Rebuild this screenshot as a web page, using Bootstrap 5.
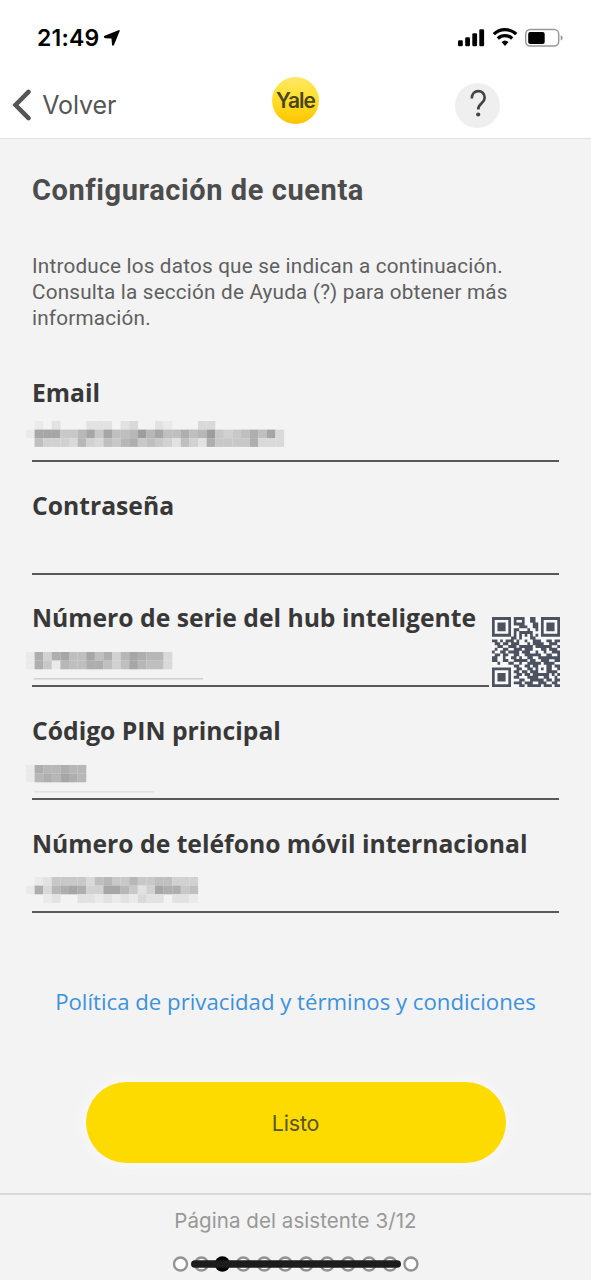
<!DOCTYPE html>
<html lang="es">
<head>
<meta charset="utf-8">
<meta name="viewport" content="width=device-width, initial-scale=1">
<title>Configuración de cuenta</title>
<link href="https://cdn.jsdelivr.net/npm/bootstrap@5.3.0/dist/css/bootstrap.min.css" rel="stylesheet">
<style>
  body { background: #f3f3f3; color: #505050; font-family: Roboto, sans-serif; }
  .screen { height: 1280px; overflow: hidden; }
  .ui-font { font-family: Inter, sans-serif; }
  .top-area { height: 139px; background: #fff; border-bottom: 1px solid #dfdfdf; }
  .status-row { height: 75px; padding: 0 27px 0 37px; color: #000; }
  .clock { font-size: 23px; font-weight: 600; letter-spacing: .2px; line-height: 1; padding-top: 2px; }
  .nav-row { height: 63px; padding-left: 12px; padding-bottom: 3px; }
  .back { width: 260px; font-size: 25px; color: #555; line-height: 1; letter-spacing: -.1px; }
  .logo { width: 47px; height: 47px; margin-top: -9px; background: linear-gradient(#ffe866, #ffe02c 45%, #fdc400); color: #4a4520; font: 600 21px/47px Inter, sans-serif; letter-spacing: -1px; }
  .help { width: 45px; height: 45px; margin-left: 136px; background: #efefef; }
  .form-area { height: 1054px; padding: 0 32px; }
  h1 { margin: 35px 0 0; font-size: 29px; line-height: 32px; font-weight: 700; color: #4c4c4c; letter-spacing: .58px; }
  .intro { margin: 47px 0 0; font-size: 20.700px; line-height: 26px; letter-spacing: .2px; color: #606060; }
  .fields { margin-top: 45px; }
  .entry { height: 112.7px; }
  .entry label { display: block; font: 700 24.7px/34px "Open Sans", sans-serif; color: #383838; white-space: nowrap; }
  .value-line { height: 52px; border-bottom: 2px solid #585858; }
  .value-line svg { display: block; margin-left: -6px; }
  .scan { margin: 15.500px -1px 0 3px; }
  .terms { font: 22.2px/30px "Open Sans", sans-serif; color: #3c92dc; margin-top: 48px; white-space: nowrap; }
  .done { width: 420px; height: 81px; margin: 65px auto 0; border: 0; background: #fedb00; color: #5a5426; font: 400 21.5px/1 Inter, sans-serif; letter-spacing: -.2px; box-shadow: 0 0 12px 3px #f8f8f8; padding-top: 8px; }
  .done:hover { background: #fedb00; }
  .wizard { height: 87px; border-top: 2px solid #d9d9d9; }
  .wizard p { margin: 12px 0 0; font-size: 20.5px; letter-spacing: .07px; line-height: 28px; color: #989898; }
  .wizard svg { margin-top: 20px; }
</style>
</head>
<body>
<div class="screen d-flex flex-column">
  <header class="top-area">
    <div class="status-row d-flex align-items-center justify-content-between ui-font">
      <div class="d-flex align-items-center">
        <span class="clock">21:49</span>
        <svg class="ms-1" width="18" height="18" viewBox="0 0 18 18"><path d="M1 7 15.500 1.200Q17.200.700 16.600 2.200L11 16Q9.800 17.500 9 16L8.500 9.500 2 9.300Q.3 8.500 1 7Z"/></svg>
      </div>
      <svg width="106" height="22" viewBox="0 0 106 22">
        <g transform="translate(0 -.7)"><rect x="0" y="14" width="4.800" height="6" rx="1.300"/><rect x="7.200" y="11" width="4.800" height="9" rx="1.300"/><rect x="14.300" y="7" width="4.800" height="13" rx="1.300"/><rect x="21.300" y="3" width="4.800" height="17" rx="1.300"/></g>
        <g transform="translate(0 -1)"><g fill="none" stroke="#000" stroke-width="3.300"><path d="M35.800 8.200C42 2 52 2 58.200 8.200"/><path d="M39.800 12.500C44 8.700 50 8.700 54.200 12.500"/></g>
        <path d="M43.500 16Q47 13 50.500 16L47 20Z"/></g>
        <g transform="translate(-.8 -1)"><rect x="68.500" y="3.500" width="33" height="16.500" rx="4.500" fill="#fff" stroke="#999" stroke-width="1.500"/>
        <rect x="71" y="6" width="16.500" height="12" rx="2"/>
        <path d="M103.500 9.200q2 .5 2 2.600t-2 2.600Z" fill="#999"/></g>
      </svg>
    </div>
    <nav class="nav-row d-flex align-items-center">
      <a class="back d-flex align-items-center text-decoration-none ui-font" href="#">
        <svg width="20" height="32" viewBox="0 0 20 32" fill="none" stroke="#555" stroke-width="4.500" stroke-linecap="round" stroke-linejoin="miter"><path d="M16.500 2.800 3.500 16 16.500 29.200"/></svg>
        <span class="ps-2">&#8202;Volver</span>
      </a>
      <div class="logo rounded-circle text-center">Yale</div>
      <a class="help rounded-circle d-flex align-items-center justify-content-center" href="#" aria-label="Ayuda">
        <svg width="18" height="34" viewBox="0 0 18 34"><path d="M2.800 10.500C2.800 .8 15.700 .8 15.700 9.800 15.700 15.300 9.200 15.300 9.200 21.500" fill="none" stroke="#444" stroke-width="2.700"/><circle cx="9.200" cy="26.500" r="2.100" fill="#444"/></svg>
      </a>
    </nav>
  </header>

  <main class="form-area">
    <h1>Configuración de cuenta</h1>
    <p class="intro">Introduce los datos que se indican a continuación.<br>Consulta la sección de Ayuda (?) para obtener más<br>información.</p>
    <div class="fields">
      <div class="entry"><label>Email</label><div class="value-line"><svg data-top="11" data-rows="010200022202300210003300000000|1999557959667a7966867a54568693|064443743657856542642855558333"></svg></div></div>
      <div class="entry"><label>Contraseña</label><div class="value-line"></div></div>
      <div class="entry d-flex">
        <div class="flex-grow-1"><label>Número de serie del hub inteligente</label><div class="value-line"><svg data-top="17" data-line="169" data-rule="#cfcfcf" data-rows="18489669684798773|18517668864697663"></svg></div></div>
        <svg id="qr" class="scan flex-shrink-0" width="68" height="70" viewBox="0 0 25 25" preserveAspectRatio="none"></svg>
      </div>
      <div class="entry"><label>Código PIN principal</label><div class="value-line"><svg data-top="17" data-line="120" data-rule="#e2e2e2" data-rows="1877877|1787987"></svg></div></div>
      <div class="entry"><label>Número de teléfono móvil internacional</label><div class="value-line"><svg data-top="16" data-rows="01255553675575566444|18378984499752498856|00120022121213220221"></svg></div></div>
    </div>
    <div class="terms text-center">Política de privacidad y términos y condiciones</div>
    <button class="done btn rounded-pill d-block">Listo</button>
  </main>

  <footer class="wizard text-center ui-font">
    <p>Página del asistente 3/12</p>
    <svg class="d-block mx-auto" id="steps" width="250" height="18" viewBox="0 0 250 18"></svg>
  </footer>
</div>
<script>
  // Masked values: every digit is the darkness of one 8.6px block
  document.querySelectorAll('svg[data-rows]').forEach(svg => {
    const top = +svg.dataset.top;
    svg.setAttribute('width', 280);
    svg.setAttribute('height', 50);
    let out = '';
    svg.dataset.rows.split('|').forEach((row, r) => {
      [...row].forEach((c, i) => {
        const level = parseInt(c, 16);
        if (level) {
          const g = 243 - level * 8.6;
          out += `<rect x="${(i * 8.6).toFixed(1)}" y="${(top + r * 8.6).toFixed(1)}" width="8.700" height="8.700" fill="rgb(${g},${g},${g})"/>`;
        }
      });
    });
    if (svg.dataset.line) out += `<rect x="8" y="43" width="${svg.dataset.line}" height="1.500" fill="${svg.dataset.rule}"/>`;
    svg.innerHTML = out;
  });

  const modules = [
    '1111111011110011001111111',
    '1000001010010011001000001',
    '1011101011110001101011101',
    '1011101000111001101011101',
    '1011101011000100101011101',
    '1000001010111110001000001',
    '1111111010101010101111111',
    '0000000110100011000000000',
    '1101011101001001110011011',
    '0110110111000101111001110',
    '0011001110111110111111001',
    '0100110011101110001101110',
    '1001101111011100100100111',
    '0110110011001111110011001',
    '1100100110100110011111111',
    '1100110011111011001110011',
    '0010001100100111110111100',
    '0000000011001101100011011',
    '1111111001100110101011001',
    '1000001011011011100011110',
    '1011101001101101111110101',
    '1011101011000111100110010',
    '1011101000110011111011011',
    '1000001011101110011100110',
    '1111111000110111110111011'
  ];
  let cells = '';
  modules.forEach((row, y) => {
    for (const run of row.matchAll(/1+/g)) {
      cells += `M${run.index} ${y}h${run[0].length}v1.060h-${run[0].length}z`;
    }
  });
  document.getElementById('qr').innerHTML =
    `<rect width="25" height="25" fill="#fafafa"/><path d="${cells}" fill="#4c525f"/>`;

  let dots = '';
  for (let i = 0; i < 12; i++) {
    dots += i === 2
      ? `<circle cx="${9.5 + i * 20.95}" cy="9" r="7.700"/>`
      : `<circle cx="${9.5 + i * 20.95}" cy="9" r="6.500" fill="#fff" stroke="#929292" stroke-width="2.300"/>`;
  }
  document.getElementById('steps').innerHTML = dots +
    '<rect x="20" y="5.200" width="210" height="7.600" rx="3.800" fill="#1c1c1c"/>';
</script>
<script src="https://cdn.jsdelivr.net/npm/bootstrap@5.3.0/dist/js/bootstrap.bundle.min.js"></script>
</body>
</html>
